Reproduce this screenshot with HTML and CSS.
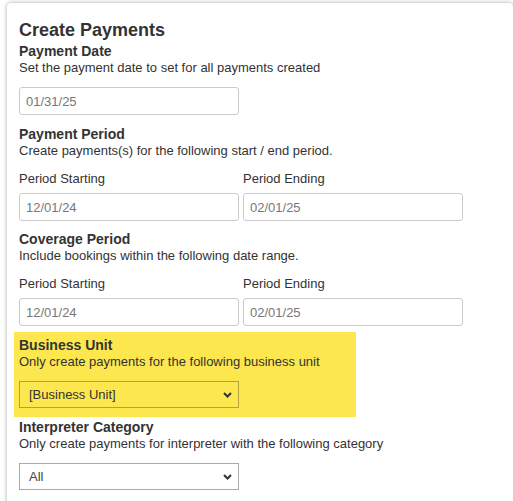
FILE: index.html
```html
<!DOCTYPE html>
<html lang="en">
<head>
    <meta charset="UTF-8">
    <meta name="viewport" content="width=device-width, initial-scale=1.0">
    <title>Create Payments</title>
    <link rel="stylesheet" href="styles.css">
</head>
<body>

    <div class="panel">
        <h2>Create Payments</h2>

        <div class="group">
            <label class="group-title" for="paymentDate">Payment Date</label>
            <div class="group-desc">Set the payment date to set for all payments created</div>
            <input type="text" id="paymentDate" class="field single" value="01/31/25">
        </div>

        <div class="group">
            <div class="group-title">Payment Period</div>
            <div class="group-desc">Create payments(s) for the following start / end period.</div>
            <div class="pair">
                <div>
                    <label class="sub-label" for="periodStart">Period Starting</label>
                    <input type="text" id="periodStart" class="field" value="12/01/24">
                </div>
                <div>
                    <label class="sub-label" for="periodEnd">Period Ending</label>
                    <input type="text" id="periodEnd" class="field" value="02/01/25">
                </div>
            </div>
        </div>

        <div class="group">
            <div class="group-title">Coverage Period</div>
            <div class="group-desc">Include bookings within the following date range.</div>
            <div class="pair">
                <div>
                    <label class="sub-label" for="coverageStart">Period Starting</label>
                    <input type="text" id="coverageStart" class="field" value="12/01/24">
                </div>
                <div>
                    <label class="sub-label" for="coverageEnd">Period Ending</label>
                    <input type="text" id="coverageEnd" class="field" value="02/01/25">
                </div>
            </div>
        </div>

        <div class="group highlight">
            <label class="group-title" for="businessUnit">Business Unit</label>
            <div class="group-desc">Only create payments for the following business unit</div>
            <div class="select-wrap">
                <select id="businessUnit" class="field select">
                    <option>[Business Unit]</option>
                </select>
                <svg class="chevron" width="9" height="6" viewBox="0 0 9 6"><path d="M1 1l3.5 3.5L8 1" fill="none" stroke="#333" stroke-width="2"/></svg>
            </div>
        </div>

        <div class="group">
            <label class="group-title" for="category">Interpreter Category</label>
            <div class="group-desc">Only create payments for interpreter with the following category</div>
            <div class="select-wrap">
                <select id="category" class="field select">
                    <option>All</option>
                </select>
                <svg class="chevron" width="9" height="6" viewBox="0 0 9 6"><path d="M1 1l3.5 3.5L8 1" fill="none" stroke="#333" stroke-width="2"/></svg>
            </div>
        </div>
    </div>

</body>
</html>
```

FILE: styles.css
```css
body {
    margin: 0;
    background: #fff;
    font-family: "Liberation Sans", Arial, sans-serif;
    color: #333;
    overflow: hidden;
}

.panel {
    margin: 3px 0 0 7px;
    padding: 17px 12px 40px;
    min-height: 560px;
    background: #fff;
    border-radius: 4px;
    box-shadow: 0 0 4px rgba(0, 0, 0, 0.35);
}

h2 {
    margin: 0;
    font-size: 18px;
    line-height: 20px;
    font-weight: bold;
}

.group {
    margin-top: 9px;
}

.panel h2 + .group {
    margin-top: 2px;
}

.group-title {
    display: block;
    font-size: 14px;
    line-height: 18px;
    font-weight: bold;
}

.group-desc {
    font-size: 13px;
    line-height: 16px;
    margin-bottom: 11px;
}

.pair {
    display: flex;
    gap: 4px;
}

.sub-label {
    display: block;
    font-size: 13px;
    line-height: 16px;
    margin: 1px 0 6px;
}

.field {
    display: block;
    width: 220px;
    height: 28px;
    padding: 0 6px;
    box-sizing: border-box;
    border: 1px solid #ccc;
    border-radius: 3px;
    background: #fff;
    font-family: "Liberation Sans", Arial, sans-serif;
    font-size: 13px;
    color: #777;
}

.field.single {
    margin: 1px 0 10px;
}

.select-wrap {
    position: relative;
    width: 220px;
}

.select {
    height: 27px;
    padding: 0 9px;
    appearance: none;
    -webkit-appearance: none;
    color: #444;
    background: transparent;
    border-color: #aaa;
    border-radius: 0;
}

.chevron {
    position: absolute;
    right: 7px;
    top: 11px;
    pointer-events: none;
}

.highlight {
    width: 342px;
    box-sizing: border-box;
    margin: 6px 0 0 -5px;
    padding: 4px 5px 9px;
    background: #fde74f;
}

.highlight .select {
    border-color: #b2a23e;
    color: #333;
}

.highlight + .group {
    margin-top: 1px;
}
```
